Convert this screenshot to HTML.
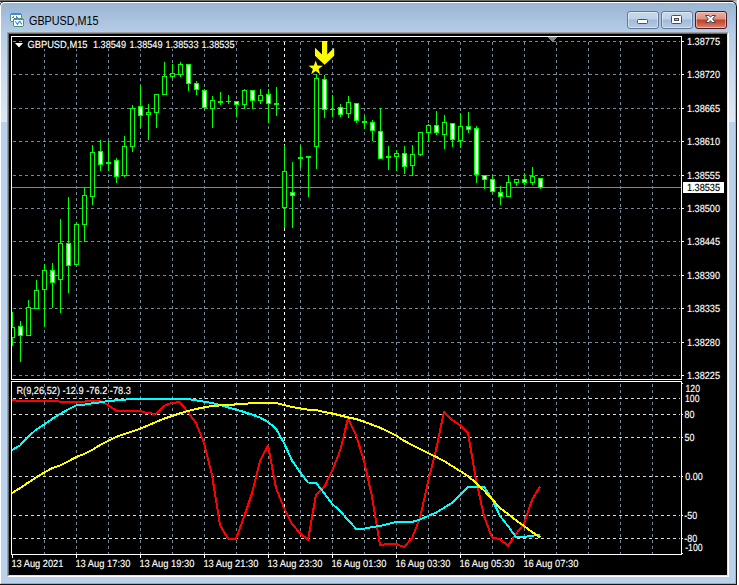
<!DOCTYPE html>
<html><head><meta charset="utf-8"><title>GBPUSD,M15</title>
<style>
html,body{margin:0;padding:0}
body{width:739px;height:585px;position:relative;overflow:hidden;background:#fff;font-family:'Liberation Sans', sans-serif}
.abs{position:absolute}
#win{left:0;top:2px;width:736px;height:582px;box-sizing:border-box;border-left:1px solid #fff;border-top:1px solid #fff;border-right:1px solid #4fd6f7;border-bottom:1px solid #3fd0f0;border-radius:5px 5px 0 0;box-shadow:0 0 0 1px #151515;
background:linear-gradient(to bottom,#99b4d1 0px,#a9c2dd 16px,#b6cde7 30px,#c4d8ee 58px,#dce8f5 119px,#b9d1ea 119.5px,#b9d1ea 100%)}
.btn{top:11px;width:32px;height:18px;box-sizing:border-box;border:1px solid #64779a;border-radius:3px;box-shadow:inset 0 0 0 1px rgba(255,255,255,.45);
background:linear-gradient(to bottom,#c6d8ec 0,#bdd1e8 7px,#a3bad7 8px,#b4cae4 16px)}
#close{border-color:#4a1822;box-shadow:inset 0 0 0 1px rgba(255,220,210,.55);background:linear-gradient(to bottom,#e9b0a3 0,#dd9080 7px,#c24128 8px,#cf5c44 12px,#dc8a76 16px)}
#title{left:29px;top:13px;font-size:12px;line-height:16px;color:#000;white-space:nowrap;transform-origin:0 0;transform:scaleX(0.9)}
</style></head><body>
<div class="abs" style="left:0;top:0;width:737px;height:1px;background:linear-gradient(to right,#707070 0,#707070 731px,#b8b8b8 737px)"></div>
<div class="abs" style="left:0;top:1px;width:733px;height:1px;background:#2b2b2b"></div>
<div class="abs" style="left:733px;top:1px;width:4px;height:5px;background:#c4c4c4"></div>
<div class="abs" style="left:0;top:2px;width:4px;height:4px;background:#e8e8e8"></div>
<div class="abs" id="win"></div>
<!-- icon -->
<svg class="abs" style="left:9px;top:12px" width="16" height="16" viewBox="9 12 16 16" shape-rendering="crispEdges">
<rect x="11" y="15" width="10" height="6" fill="#fffef2"/>
<rect x="11" y="13" width="1" height="1" fill="#3f8f7a"/>
<rect x="12" y="13" width="1" height="1" fill="#4a86ff"/>
<rect x="13" y="13" width="1" height="1" fill="#3f8f7a"/>
<rect x="14" y="13" width="1" height="1" fill="#4a86ff"/>
<rect x="15" y="13" width="1" height="1" fill="#3f8f7a"/>
<rect x="16" y="13" width="1" height="1" fill="#4a86ff"/>
<rect x="17" y="13" width="1" height="1" fill="#3f8f7a"/>
<rect x="18" y="13" width="1" height="1" fill="#4a86ff"/>
<rect x="19" y="13" width="1" height="1" fill="#3f8f7a"/>
<rect x="20" y="13" width="1" height="1" fill="#4a86ff"/>
<rect x="10" y="14" width="12" height="1" fill="#4a86ff"/>
<rect x="14" y="14" width="1" height="1" fill="#3f8f7a"/>
<rect x="18" y="14" width="1" height="1" fill="#3f8f7a"/>
<rect x="10" y="15" width="1" height="1" fill="#4a86ff"/>
<rect x="21" y="15" width="1" height="1" fill="#4a86ff"/>
<rect x="10" y="16" width="1" height="1" fill="#3f8f7a"/>
<rect x="21" y="16" width="1" height="1" fill="#3f8f7a"/>
<rect x="10" y="17" width="1" height="1" fill="#4a86ff"/>
<rect x="21" y="17" width="1" height="1" fill="#4a86ff"/>
<rect x="10" y="18" width="1" height="1" fill="#3f8f7a"/>
<rect x="21" y="18" width="1" height="1" fill="#3f8f7a"/>
<rect x="10" y="19" width="1" height="1" fill="#4a86ff"/>
<rect x="21" y="19" width="1" height="1" fill="#4a86ff"/>
<rect x="10" y="20" width="1" height="1" fill="#3f8f7a"/>
<rect x="21" y="20" width="1" height="1" fill="#3f8f7a"/>
<rect x="11" y="21" width="1" height="1" fill="#3f8f7a"/>
<rect x="12" y="21" width="1" height="1" fill="#4a86ff"/>
<rect x="13" y="21" width="1" height="1" fill="#3f8f7a"/>
<rect x="14" y="21" width="1" height="1" fill="#4a86ff"/>
<rect x="15" y="21" width="1" height="1" fill="#3f8f7a"/>
<rect x="16" y="21" width="1" height="1" fill="#4a86ff"/>
<rect x="17" y="21" width="1" height="1" fill="#3f8f7a"/>
<rect x="18" y="21" width="1" height="1" fill="#4a86ff"/>
<rect x="19" y="21" width="1" height="1" fill="#3f8f7a"/>
<rect x="20" y="21" width="1" height="1" fill="#4a86ff"/>
<rect x="12" y="17" width="2" height="1" fill="#4a86ff"/>
<rect x="13" y="16" width="1" height="1" fill="#4a86ff"/>
<rect x="16" y="16" width="1" height="1" fill="#4a86ff"/>
<rect x="16" y="17" width="2" height="1" fill="#4a86ff"/>
<rect x="14" y="20" width="9" height="6" fill="#ffffff"/>
<rect x="14" y="18" width="1" height="1" fill="#3f8f7a"/>
<rect x="15" y="18" width="1" height="1" fill="#4a86ff"/>
<rect x="16" y="18" width="1" height="1" fill="#3f8f7a"/>
<rect x="17" y="18" width="1" height="1" fill="#4a86ff"/>
<rect x="18" y="18" width="1" height="1" fill="#3f8f7a"/>
<rect x="19" y="18" width="1" height="1" fill="#4a86ff"/>
<rect x="20" y="18" width="1" height="1" fill="#3f8f7a"/>
<rect x="21" y="18" width="1" height="1" fill="#4a86ff"/>
<rect x="22" y="18" width="1" height="1" fill="#3f8f7a"/>
<rect x="13" y="19" width="11" height="1" fill="#4a86ff"/>
<rect x="15" y="19" width="1" height="1" fill="#3f8f7a"/>
<rect x="17" y="19" width="1" height="1" fill="#35c8e8"/>
<rect x="21" y="19" width="1" height="1" fill="#3f8f7a"/>
<rect x="13" y="20" width="1" height="1" fill="#4a86ff"/>
<rect x="23" y="20" width="1" height="1" fill="#4a86ff"/>
<rect x="13" y="21" width="1" height="1" fill="#3f8f7a"/>
<rect x="23" y="21" width="1" height="1" fill="#3f8f7a"/>
<rect x="13" y="22" width="1" height="1" fill="#4a86ff"/>
<rect x="23" y="22" width="1" height="1" fill="#4a86ff"/>
<rect x="13" y="23" width="1" height="1" fill="#3f8f7a"/>
<rect x="23" y="23" width="1" height="1" fill="#3f8f7a"/>
<rect x="13" y="24" width="1" height="1" fill="#4a86ff"/>
<rect x="23" y="24" width="1" height="1" fill="#4a86ff"/>
<rect x="13" y="25" width="1" height="1" fill="#3f8f7a"/>
<rect x="23" y="25" width="1" height="1" fill="#3f8f7a"/>
<rect x="14" y="26" width="1" height="1" fill="#3f8f7a"/>
<rect x="15" y="26" width="1" height="1" fill="#4a86ff"/>
<rect x="16" y="26" width="1" height="1" fill="#3f8f7a"/>
<rect x="17" y="26" width="1" height="1" fill="#4a86ff"/>
<rect x="18" y="26" width="1" height="1" fill="#3f8f7a"/>
<rect x="19" y="26" width="1" height="1" fill="#4a86ff"/>
<rect x="20" y="26" width="1" height="1" fill="#3f8f7a"/>
<rect x="21" y="26" width="1" height="1" fill="#4a86ff"/>
<rect x="22" y="26" width="1" height="1" fill="#3f8f7a"/>
<polyline points="15.3,21.3 17.5,24.4 19.3,21.4 20,21.4 21.8,24.4" fill="none" stroke="#4a86ff" stroke-width="1.1" shape-rendering="geometricPrecision"/>
</svg>
<div class="abs" id="title">GBPUSD,M15</div>
<!-- caption buttons -->
<div class="abs btn" style="left:627px"></div>
<div class="abs btn" style="left:661px"></div>
<div class="abs btn" id="close" style="left:695px"></div>
<svg class="abs" style="left:627px;top:11px" width="100" height="18" viewBox="627 11 100 18">
<rect x="637.5" y="19.5" width="10" height="4" fill="#fff" stroke="#46505f" stroke-width="1" rx="1"/>
<rect x="671.5" y="15.5" width="10" height="8" fill="#fff" stroke="#46505f" stroke-width="1" rx="1"/>
<rect x="674.5" y="18.5" width="4" height="2" fill="#a9c0dc" stroke="#46505f" stroke-width="1"/>
<path d="M705.5 15.5 L709 15.5 L710.5 17.3 L712 15.5 L715.5 15.5 L712.6 19 L715.5 22.5 L712 22.5 L710.5 20.7 L709 22.5 L705.5 22.5 L708.4 19 Z" fill="#fff" stroke="#3c4960" stroke-width="1" stroke-linejoin="round"/>
</svg>
<!-- client edge -->
<div class="abs" style="left:7px;top:32px;width:722px;height:545px;box-sizing:border-box;border:1px solid;border-color:#a0a0a0 #fff #fff #a0a0a0"></div>
<div class="abs" style="left:8px;top:33px;width:720px;height:543px;box-sizing:border-box;border:1px solid;border-color:#696969 #e3e3e3 #e3e3e3 #696969;background:#000"></div>
<svg width="718" height="541" viewBox="9 34 718 541" style="position:absolute;left:9px;top:34px;display:block" font-family="'Liberation Sans', sans-serif" shape-rendering="crispEdges">
<rect x="9" y="34" width="718" height="541" fill="#000"/>
<line x1="13" y1="41.5" x2="680" y2="41.5" stroke="#778899" stroke-width="1" stroke-dasharray="3 3"/>
<line x1="13" y1="74.5" x2="680" y2="74.5" stroke="#778899" stroke-width="1" stroke-dasharray="3 3"/>
<line x1="13" y1="108.5" x2="680" y2="108.5" stroke="#778899" stroke-width="1" stroke-dasharray="3 3"/>
<line x1="13" y1="141.5" x2="680" y2="141.5" stroke="#778899" stroke-width="1" stroke-dasharray="3 3"/>
<line x1="13" y1="175.5" x2="680" y2="175.5" stroke="#778899" stroke-width="1" stroke-dasharray="3 3"/>
<line x1="13" y1="208.5" x2="680" y2="208.5" stroke="#778899" stroke-width="1" stroke-dasharray="3 3"/>
<line x1="13" y1="241.5" x2="680" y2="241.5" stroke="#778899" stroke-width="1" stroke-dasharray="3 3"/>
<line x1="13" y1="275.5" x2="680" y2="275.5" stroke="#778899" stroke-width="1" stroke-dasharray="3 3"/>
<line x1="13" y1="308.5" x2="680" y2="308.5" stroke="#778899" stroke-width="1" stroke-dasharray="3 3"/>
<line x1="13" y1="342.5" x2="680" y2="342.5" stroke="#778899" stroke-width="1" stroke-dasharray="3 3"/>
<line x1="13" y1="375.5" x2="680" y2="375.5" stroke="#778899" stroke-width="1" stroke-dasharray="3 3"/>
<line x1="44.5" y1="42" x2="44.5" y2="379" stroke="#778899" stroke-width="1" stroke-dasharray="3 3"/>
<line x1="76.5" y1="42" x2="76.5" y2="379" stroke="#778899" stroke-width="1" stroke-dasharray="3 3"/>
<line x1="108.5" y1="42" x2="108.5" y2="379" stroke="#778899" stroke-width="1" stroke-dasharray="3 3"/>
<line x1="140.5" y1="42" x2="140.5" y2="379" stroke="#778899" stroke-width="1" stroke-dasharray="3 3"/>
<line x1="172.5" y1="42" x2="172.5" y2="379" stroke="#778899" stroke-width="1" stroke-dasharray="3 3"/>
<line x1="204.5" y1="42" x2="204.5" y2="379" stroke="#778899" stroke-width="1" stroke-dasharray="3 3"/>
<line x1="236.5" y1="42" x2="236.5" y2="379" stroke="#778899" stroke-width="1" stroke-dasharray="3 3"/>
<line x1="268.5" y1="42" x2="268.5" y2="379" stroke="#778899" stroke-width="1" stroke-dasharray="3 3"/>
<line x1="300.5" y1="42" x2="300.5" y2="379" stroke="#778899" stroke-width="1" stroke-dasharray="3 3"/>
<line x1="332.5" y1="42" x2="332.5" y2="379" stroke="#778899" stroke-width="1" stroke-dasharray="3 3"/>
<line x1="364.5" y1="42" x2="364.5" y2="379" stroke="#778899" stroke-width="1" stroke-dasharray="3 3"/>
<line x1="396.5" y1="42" x2="396.5" y2="379" stroke="#778899" stroke-width="1" stroke-dasharray="3 3"/>
<line x1="428.5" y1="42" x2="428.5" y2="379" stroke="#778899" stroke-width="1" stroke-dasharray="3 3"/>
<line x1="460.5" y1="42" x2="460.5" y2="379" stroke="#778899" stroke-width="1" stroke-dasharray="3 3"/>
<line x1="492.5" y1="42" x2="492.5" y2="379" stroke="#778899" stroke-width="1" stroke-dasharray="3 3"/>
<line x1="524.5" y1="42" x2="524.5" y2="379" stroke="#778899" stroke-width="1" stroke-dasharray="3 3"/>
<line x1="556.5" y1="42" x2="556.5" y2="379" stroke="#778899" stroke-width="1" stroke-dasharray="3 3"/>
<line x1="588.5" y1="42" x2="588.5" y2="379" stroke="#778899" stroke-width="1" stroke-dasharray="3 3"/>
<line x1="620.5" y1="42" x2="620.5" y2="379" stroke="#778899" stroke-width="1" stroke-dasharray="3 3"/>
<line x1="652.5" y1="42" x2="652.5" y2="379" stroke="#778899" stroke-width="1" stroke-dasharray="3 3"/>
<line x1="44.5" y1="384" x2="44.5" y2="554" stroke="#778899" stroke-width="1" stroke-dasharray="3 3"/>
<line x1="76.5" y1="384" x2="76.5" y2="554" stroke="#778899" stroke-width="1" stroke-dasharray="3 3"/>
<line x1="108.5" y1="384" x2="108.5" y2="554" stroke="#778899" stroke-width="1" stroke-dasharray="3 3"/>
<line x1="140.5" y1="384" x2="140.5" y2="554" stroke="#778899" stroke-width="1" stroke-dasharray="3 3"/>
<line x1="172.5" y1="384" x2="172.5" y2="554" stroke="#778899" stroke-width="1" stroke-dasharray="3 3"/>
<line x1="204.5" y1="384" x2="204.5" y2="554" stroke="#778899" stroke-width="1" stroke-dasharray="3 3"/>
<line x1="236.5" y1="384" x2="236.5" y2="554" stroke="#778899" stroke-width="1" stroke-dasharray="3 3"/>
<line x1="268.5" y1="384" x2="268.5" y2="554" stroke="#778899" stroke-width="1" stroke-dasharray="3 3"/>
<line x1="300.5" y1="384" x2="300.5" y2="554" stroke="#778899" stroke-width="1" stroke-dasharray="3 3"/>
<line x1="332.5" y1="384" x2="332.5" y2="554" stroke="#778899" stroke-width="1" stroke-dasharray="3 3"/>
<line x1="364.5" y1="384" x2="364.5" y2="554" stroke="#778899" stroke-width="1" stroke-dasharray="3 3"/>
<line x1="396.5" y1="384" x2="396.5" y2="554" stroke="#778899" stroke-width="1" stroke-dasharray="3 3"/>
<line x1="428.5" y1="384" x2="428.5" y2="554" stroke="#778899" stroke-width="1" stroke-dasharray="3 3"/>
<line x1="460.5" y1="384" x2="460.5" y2="554" stroke="#778899" stroke-width="1" stroke-dasharray="3 3"/>
<line x1="492.5" y1="384" x2="492.5" y2="554" stroke="#778899" stroke-width="1" stroke-dasharray="3 3"/>
<line x1="524.5" y1="384" x2="524.5" y2="554" stroke="#778899" stroke-width="1" stroke-dasharray="3 3"/>
<line x1="556.5" y1="384" x2="556.5" y2="554" stroke="#778899" stroke-width="1" stroke-dasharray="3 3"/>
<line x1="588.5" y1="384" x2="588.5" y2="554" stroke="#778899" stroke-width="1" stroke-dasharray="3 3"/>
<line x1="620.5" y1="384" x2="620.5" y2="554" stroke="#778899" stroke-width="1" stroke-dasharray="3 3"/>
<line x1="652.5" y1="384" x2="652.5" y2="554" stroke="#778899" stroke-width="1" stroke-dasharray="3 3"/>
<line x1="13" y1="398.5" x2="680" y2="398.5" stroke="#dcdcdc" stroke-width="1" stroke-dasharray="3 3"/>
<line x1="13" y1="414.5" x2="680" y2="414.5" stroke="#dcdcdc" stroke-width="1" stroke-dasharray="3 3"/>
<line x1="13" y1="437.5" x2="680" y2="437.5" stroke="#dcdcdc" stroke-width="1" stroke-dasharray="3 3"/>
<line x1="13" y1="476.5" x2="680" y2="476.5" stroke="#dcdcdc" stroke-width="1" stroke-dasharray="3 3"/>
<line x1="13" y1="515.5" x2="680" y2="515.5" stroke="#dcdcdc" stroke-width="1" stroke-dasharray="3 3"/>
<line x1="13" y1="538.5" x2="680" y2="538.5" stroke="#dcdcdc" stroke-width="1" stroke-dasharray="3 3"/>
<line x1="284.5" y1="42" x2="284.5" y2="379" stroke="#fff" stroke-width="1" stroke-dasharray="3 3"/>
<line x1="284.5" y1="384" x2="284.5" y2="554" stroke="#fff" stroke-width="1" stroke-dasharray="3 3"/>
<rect x="11" y="36" width="671" height="1" fill="#fff"/>
<rect x="11" y="379" width="671" height="1" fill="#fff"/>
<rect x="11" y="36" width="1" height="344" fill="#fff"/>
<rect x="681" y="36" width="1" height="344" fill="#fff"/>
<rect x="11" y="381" width="671" height="1" fill="#fff"/>
<rect x="11" y="554" width="671" height="1" fill="#fff"/>
<rect x="11" y="381" width="1" height="174" fill="#fff"/>
<rect x="681" y="381" width="1" height="174" fill="#fff"/>
<rect x="548" y="37" width="9" height="1" fill="#778899"/>
<rect x="549" y="38" width="7" height="1" fill="#778899"/>
<rect x="550" y="39" width="5" height="1" fill="#778899"/>
<rect x="551" y="40" width="3" height="1" fill="#778899"/>
<rect x="552" y="41" width="1" height="1" fill="#778899"/>
<rect x="12" y="187" width="669" height="1" fill="#778899"/>
<g>
<rect x="12" y="312" width="1" height="34" fill="#00ff00"/>
<rect x="12" y="327" width="3" height="11" fill="#00ff00"/>
<rect x="12" y="328" width="2" height="9" fill="#000"/>
<rect x="20" y="321" width="1" height="41" fill="#00ff00"/>
<rect x="18" y="326" width="5" height="10" fill="#00ff00"/>
<rect x="19" y="327" width="3" height="8" fill="#fff"/>
<rect x="28" y="300" width="1" height="36" fill="#00ff00"/>
<rect x="26" y="307" width="5" height="29" fill="#00ff00"/>
<rect x="27" y="308" width="3" height="27" fill="#000"/>
<rect x="36" y="280" width="1" height="29" fill="#00ff00"/>
<rect x="34" y="290" width="5" height="19" fill="#00ff00"/>
<rect x="35" y="291" width="3" height="17" fill="#000"/>
<rect x="44" y="264" width="1" height="63" fill="#00ff00"/>
<rect x="42" y="270" width="5" height="20" fill="#00ff00"/>
<rect x="43" y="271" width="3" height="18" fill="#000"/>
<rect x="52" y="263" width="1" height="45" fill="#00ff00"/>
<rect x="50" y="270" width="5" height="13" fill="#00ff00"/>
<rect x="51" y="271" width="3" height="11" fill="#fff"/>
<rect x="60" y="219" width="1" height="94" fill="#00ff00"/>
<rect x="58" y="243" width="5" height="37" fill="#00ff00"/>
<rect x="59" y="244" width="3" height="35" fill="#000"/>
<rect x="68" y="197" width="1" height="96" fill="#00ff00"/>
<rect x="66" y="243" width="5" height="23" fill="#00ff00"/>
<rect x="67" y="244" width="3" height="21" fill="#fff"/>
<rect x="76" y="222" width="1" height="43" fill="#00ff00"/>
<rect x="74" y="224" width="5" height="41" fill="#00ff00"/>
<rect x="75" y="225" width="3" height="39" fill="#000"/>
<rect x="84" y="188" width="1" height="54" fill="#00ff00"/>
<rect x="82" y="195" width="5" height="30" fill="#00ff00"/>
<rect x="83" y="196" width="3" height="28" fill="#000"/>
<rect x="92" y="145" width="1" height="60" fill="#00ff00"/>
<rect x="90" y="152" width="5" height="45" fill="#00ff00"/>
<rect x="91" y="153" width="3" height="43" fill="#000"/>
<rect x="100" y="140" width="1" height="31" fill="#00ff00"/>
<rect x="98" y="151" width="5" height="14" fill="#00ff00"/>
<rect x="99" y="152" width="3" height="12" fill="#fff"/>
<rect x="108" y="141" width="1" height="30" fill="#00ff00"/>
<rect x="106" y="162" width="5" height="2" fill="#00ff00"/>
<rect x="116" y="158" width="1" height="25" fill="#00ff00"/>
<rect x="114" y="160" width="5" height="17" fill="#00ff00"/>
<rect x="115" y="161" width="3" height="15" fill="#fff"/>
<rect x="124" y="136" width="1" height="41" fill="#00ff00"/>
<rect x="122" y="146" width="5" height="30" fill="#00ff00"/>
<rect x="123" y="147" width="3" height="28" fill="#000"/>
<rect x="132" y="105" width="1" height="47" fill="#00ff00"/>
<rect x="130" y="108" width="5" height="39" fill="#00ff00"/>
<rect x="131" y="109" width="3" height="37" fill="#000"/>
<rect x="140" y="85" width="1" height="43" fill="#00ff00"/>
<rect x="138" y="106" width="5" height="10" fill="#00ff00"/>
<rect x="139" y="107" width="3" height="8" fill="#fff"/>
<rect x="148" y="104" width="1" height="36" fill="#00ff00"/>
<rect x="146" y="112" width="5" height="3" fill="#00ff00"/>
<rect x="147" y="113" width="3" height="1" fill="#000"/>
<rect x="156" y="94" width="1" height="34" fill="#00ff00"/>
<rect x="154" y="94" width="5" height="19" fill="#00ff00"/>
<rect x="155" y="95" width="3" height="17" fill="#000"/>
<rect x="164" y="62" width="1" height="33" fill="#00ff00"/>
<rect x="162" y="76" width="5" height="19" fill="#00ff00"/>
<rect x="163" y="77" width="3" height="17" fill="#000"/>
<rect x="172" y="64" width="1" height="14" fill="#00ff00"/>
<rect x="170" y="73" width="5" height="4" fill="#00ff00"/>
<rect x="171" y="74" width="3" height="2" fill="#000"/>
<rect x="180" y="62" width="1" height="15" fill="#00ff00"/>
<rect x="178" y="64" width="5" height="11" fill="#00ff00"/>
<rect x="179" y="65" width="3" height="9" fill="#000"/>
<rect x="188" y="64" width="1" height="27" fill="#00ff00"/>
<rect x="186" y="64" width="5" height="20" fill="#00ff00"/>
<rect x="187" y="65" width="3" height="18" fill="#fff"/>
<rect x="196" y="81" width="1" height="14" fill="#00ff00"/>
<rect x="194" y="83" width="5" height="7" fill="#00ff00"/>
<rect x="195" y="84" width="3" height="5" fill="#fff"/>
<rect x="204" y="89" width="1" height="21" fill="#00ff00"/>
<rect x="202" y="90" width="5" height="18" fill="#00ff00"/>
<rect x="203" y="91" width="3" height="16" fill="#fff"/>
<rect x="212" y="96" width="1" height="32" fill="#00ff00"/>
<rect x="210" y="100" width="5" height="9" fill="#00ff00"/>
<rect x="211" y="101" width="3" height="7" fill="#000"/>
<rect x="220" y="92" width="1" height="13" fill="#00ff00"/>
<rect x="218" y="101" width="5" height="2" fill="#00ff00"/>
<rect x="228" y="95" width="1" height="9" fill="#00ff00"/>
<rect x="226" y="101" width="5" height="1" fill="#00ff00"/>
<rect x="236" y="101" width="1" height="16" fill="#00ff00"/>
<rect x="234" y="101" width="5" height="4" fill="#00ff00"/>
<rect x="235" y="102" width="3" height="2" fill="#fff"/>
<rect x="244" y="89" width="1" height="20" fill="#00ff00"/>
<rect x="242" y="90" width="5" height="15" fill="#00ff00"/>
<rect x="243" y="91" width="3" height="13" fill="#000"/>
<rect x="252" y="90" width="1" height="19" fill="#00ff00"/>
<rect x="250" y="90" width="5" height="11" fill="#00ff00"/>
<rect x="251" y="91" width="3" height="9" fill="#fff"/>
<rect x="260" y="89" width="1" height="15" fill="#00ff00"/>
<rect x="258" y="95" width="5" height="6" fill="#00ff00"/>
<rect x="259" y="96" width="3" height="4" fill="#000"/>
<rect x="268" y="89" width="1" height="34" fill="#00ff00"/>
<rect x="266" y="94" width="5" height="10" fill="#00ff00"/>
<rect x="267" y="95" width="3" height="8" fill="#fff"/>
<rect x="276" y="87" width="1" height="29" fill="#00ff00"/>
<rect x="274" y="103" width="5" height="2" fill="#00ff00"/>
<rect x="284" y="145" width="1" height="83" fill="#00ff00"/>
<rect x="282" y="171" width="5" height="37" fill="#00ff00"/>
<rect x="283" y="172" width="3" height="35" fill="#000"/>
<rect x="292" y="162" width="1" height="66" fill="#00ff00"/>
<rect x="290" y="192" width="5" height="4" fill="#00ff00"/>
<rect x="291" y="193" width="3" height="2" fill="#fff"/>
<rect x="300" y="145" width="1" height="23" fill="#00ff00"/>
<rect x="298" y="157" width="5" height="2" fill="#00ff00"/>
<rect x="308" y="156" width="1" height="41" fill="#00ff00"/>
<rect x="306" y="156" width="5" height="2" fill="#00ff00"/>
<rect x="316" y="74" width="1" height="95" fill="#00ff00"/>
<rect x="314" y="78" width="5" height="69" fill="#00ff00"/>
<rect x="315" y="79" width="3" height="67" fill="#000"/>
<rect x="324" y="75" width="1" height="43" fill="#00ff00"/>
<rect x="322" y="79" width="5" height="31" fill="#00ff00"/>
<rect x="323" y="80" width="3" height="29" fill="#fff"/>
<rect x="332" y="95" width="1" height="22" fill="#00ff00"/>
<rect x="330" y="109" width="5" height="1" fill="#00ff00"/>
<rect x="340" y="104" width="1" height="13" fill="#00ff00"/>
<rect x="338" y="107" width="5" height="8" fill="#00ff00"/>
<rect x="339" y="108" width="3" height="6" fill="#fff"/>
<rect x="348" y="96" width="1" height="22" fill="#00ff00"/>
<rect x="346" y="102" width="5" height="12" fill="#00ff00"/>
<rect x="347" y="103" width="3" height="10" fill="#000"/>
<rect x="356" y="103" width="1" height="20" fill="#00ff00"/>
<rect x="354" y="103" width="5" height="18" fill="#00ff00"/>
<rect x="355" y="104" width="3" height="16" fill="#fff"/>
<rect x="364" y="115" width="1" height="14" fill="#00ff00"/>
<rect x="362" y="121" width="5" height="2" fill="#00ff00"/>
<rect x="372" y="120" width="1" height="21" fill="#00ff00"/>
<rect x="370" y="122" width="5" height="9" fill="#00ff00"/>
<rect x="371" y="123" width="3" height="7" fill="#fff"/>
<rect x="380" y="108" width="1" height="51" fill="#00ff00"/>
<rect x="378" y="131" width="5" height="28" fill="#00ff00"/>
<rect x="379" y="132" width="3" height="26" fill="#fff"/>
<rect x="388" y="146" width="1" height="24" fill="#00ff00"/>
<rect x="386" y="156" width="5" height="2" fill="#00ff00"/>
<rect x="396" y="150" width="1" height="21" fill="#00ff00"/>
<rect x="394" y="153" width="5" height="4" fill="#00ff00"/>
<rect x="395" y="154" width="3" height="2" fill="#000"/>
<rect x="404" y="146" width="1" height="28" fill="#00ff00"/>
<rect x="402" y="153" width="5" height="14" fill="#00ff00"/>
<rect x="403" y="154" width="3" height="12" fill="#fff"/>
<rect x="412" y="145" width="1" height="31" fill="#00ff00"/>
<rect x="410" y="154" width="5" height="12" fill="#00ff00"/>
<rect x="411" y="155" width="3" height="10" fill="#000"/>
<rect x="420" y="132" width="1" height="24" fill="#00ff00"/>
<rect x="418" y="132" width="5" height="23" fill="#00ff00"/>
<rect x="419" y="133" width="3" height="21" fill="#000"/>
<rect x="428" y="124" width="1" height="17" fill="#00ff00"/>
<rect x="426" y="125" width="5" height="8" fill="#00ff00"/>
<rect x="427" y="126" width="3" height="6" fill="#000"/>
<rect x="436" y="111" width="1" height="24" fill="#00ff00"/>
<rect x="434" y="125" width="5" height="8" fill="#00ff00"/>
<rect x="435" y="126" width="3" height="6" fill="#fff"/>
<rect x="444" y="115" width="1" height="34" fill="#00ff00"/>
<rect x="442" y="122" width="5" height="13" fill="#00ff00"/>
<rect x="443" y="123" width="3" height="11" fill="#000"/>
<rect x="452" y="123" width="1" height="24" fill="#00ff00"/>
<rect x="450" y="123" width="5" height="17" fill="#00ff00"/>
<rect x="451" y="124" width="3" height="15" fill="#fff"/>
<rect x="460" y="113" width="1" height="35" fill="#00ff00"/>
<rect x="458" y="126" width="5" height="15" fill="#00ff00"/>
<rect x="459" y="127" width="3" height="13" fill="#000"/>
<rect x="468" y="112" width="1" height="21" fill="#00ff00"/>
<rect x="466" y="126" width="5" height="4" fill="#00ff00"/>
<rect x="467" y="127" width="3" height="2" fill="#fff"/>
<rect x="476" y="126" width="1" height="57" fill="#00ff00"/>
<rect x="474" y="128" width="5" height="47" fill="#00ff00"/>
<rect x="475" y="129" width="3" height="45" fill="#fff"/>
<rect x="484" y="175" width="1" height="14" fill="#00ff00"/>
<rect x="482" y="175" width="5" height="5" fill="#00ff00"/>
<rect x="483" y="176" width="3" height="3" fill="#fff"/>
<rect x="492" y="175" width="1" height="19" fill="#00ff00"/>
<rect x="490" y="179" width="5" height="13" fill="#00ff00"/>
<rect x="491" y="180" width="3" height="11" fill="#fff"/>
<rect x="500" y="186" width="1" height="19" fill="#00ff00"/>
<rect x="498" y="192" width="5" height="5" fill="#00ff00"/>
<rect x="499" y="193" width="3" height="3" fill="#fff"/>
<rect x="508" y="175" width="1" height="22" fill="#00ff00"/>
<rect x="506" y="182" width="5" height="15" fill="#00ff00"/>
<rect x="507" y="183" width="3" height="13" fill="#000"/>
<rect x="516" y="179" width="1" height="7" fill="#00ff00"/>
<rect x="514" y="179" width="5" height="4" fill="#00ff00"/>
<rect x="515" y="180" width="3" height="2" fill="#000"/>
<rect x="524" y="173" width="1" height="12" fill="#00ff00"/>
<rect x="522" y="179" width="5" height="4" fill="#00ff00"/>
<rect x="523" y="180" width="3" height="2" fill="#fff"/>
<rect x="532" y="167" width="1" height="18" fill="#00ff00"/>
<rect x="530" y="176" width="5" height="7" fill="#00ff00"/>
<rect x="531" y="177" width="3" height="5" fill="#000"/>
<rect x="540" y="178" width="1" height="11" fill="#00ff00"/>
<rect x="538" y="178" width="5" height="10" fill="#00ff00"/>
<rect x="539" y="179" width="3" height="8" fill="#fff"/>
</g>
<g shape-rendering="geometricPrecision" fill="#ffff00">
<polygon points="322,41 327.2,41 327.2,54.4 334.2,47.8 334.2,55.7 324.6,64.8 315,55.7 315,47.8 322,54.4"/>
<polygon points="315.70,60.40 317.46,65.57 322.93,65.65 318.55,68.93 320.17,74.15 315.70,71.00 311.23,74.15 312.85,68.93 308.47,65.65 313.94,65.57"/>
</g>
<polyline points="12,399.6 16,400.6 20,400.8 28,400.8 36,400.8 44,400.8 52,400.8 60,401.6 68,401.6 76,401.6 84,401.6 92,400.6 100,401 108,405 116,410.6 124,411 132,411 140,411 148,413.4 156,413.6 164,406 172,402.6 180,402.4 188,412 196,423 204,443 212,475 220,525 228,538.5 236,538.5 244,517 252,493 260,461 268,445.5 276,488 284,508 292,524 300,533 308,540 316,494.5 324,487.5 332,471 340,451 348,418.6 356,435 364,461 372,496.5 380,545 388,544 396,544 404,547 412,538 420,518 428,482 436,450 444,411.7 452,420 460,425 468,433 476,479.5 484,516 492,537.5 500,539 508,546 516,534 524,523.7 532,500 540,486.5" fill="none" stroke="#ff0000" stroke-width="2" stroke-linejoin="round"/>
<polyline points="12,450 20,445.5 28,437 36,429.7 44,424.7 52,419 60,414 68,409.6 76,405.4 84,404.6 92,403.4 100,402.4 108,401 116,400.4 124,399.6 132,399.2 140,399.2 148,399 156,399 164,399 172,399 180,399 188,399 196,400.4 204,401.6 212,403 220,405 228,407.4 236,409.6 244,412 252,414.6 260,417.6 268,422 276,428.7 284,443 292,460.5 300,472 308,482.5 316,482.7 324,493 332,503.7 340,511 348,520 356,528.7 364,528.7 372,527 380,526 388,524 396,522 404,522 412,522 420,519.5 428,516 436,512.7 444,507.8 452,502.8 460,495 468,486.8 476,486.8 484,486.8 492,499 500,516 508,526 516,537 524,537 532,535.7 540,535" fill="none" stroke="#00ffff" stroke-width="2" stroke-linejoin="round"/>
<polyline points="12,493.2 20,488.1 28,482.7 36,477.5 44,472.7 52,468.1 60,465.5 68,461.5 76,457.1 84,454.1 92,450.1 100,445.1 108,441.1 116,437.1 124,434.1 132,431.5 140,428.7 148,425.5 156,422 164,418.7 172,416 180,413.4 188,411 196,409 204,407.4 212,406 220,405.4 228,405 236,404.4 244,404 252,403 260,402.6 268,402.6 276,403 284,405 292,407 300,408.4 308,409.6 316,410 324,412 332,413.4 340,415.4 348,417.4 356,419 364,421.7 372,424.7 380,427.7 388,431.5 396,435.5 404,440.7 412,445.1 420,449.1 428,453.1 436,456.8 444,461 452,466 460,471 468,476 476,483 484,490.5 492,499 500,508 508,514 516,520.3 524,526 532,532 540,537.3" fill="none" stroke="#ffff00" stroke-width="2" stroke-linejoin="round"/>
<g shape-rendering="geometricPrecision" text-rendering="geometricPrecision">
<rect x="682" y="41" width="2" height="1" fill="#fff" shape-rendering="crispEdges"/>
<text x="687" y="45" fill="#fff" stroke="#fff" stroke-width="0.15" font-size="10.3" textLength="33" lengthAdjust="spacingAndGlyphs" text-anchor="start">1.38775</text>
<rect x="682" y="74" width="2" height="1" fill="#fff" shape-rendering="crispEdges"/>
<text x="687" y="78" fill="#fff" stroke="#fff" stroke-width="0.15" font-size="10.3" textLength="33" lengthAdjust="spacingAndGlyphs" text-anchor="start">1.38720</text>
<rect x="682" y="108" width="2" height="1" fill="#fff" shape-rendering="crispEdges"/>
<text x="687" y="112" fill="#fff" stroke="#fff" stroke-width="0.15" font-size="10.3" textLength="33" lengthAdjust="spacingAndGlyphs" text-anchor="start">1.38665</text>
<rect x="682" y="141" width="2" height="1" fill="#fff" shape-rendering="crispEdges"/>
<text x="687" y="145" fill="#fff" stroke="#fff" stroke-width="0.15" font-size="10.3" textLength="33" lengthAdjust="spacingAndGlyphs" text-anchor="start">1.38610</text>
<rect x="682" y="175" width="2" height="1" fill="#fff" shape-rendering="crispEdges"/>
<text x="687" y="179" fill="#fff" stroke="#fff" stroke-width="0.15" font-size="10.3" textLength="33" lengthAdjust="spacingAndGlyphs" text-anchor="start">1.38555</text>
<rect x="682" y="208" width="2" height="1" fill="#fff" shape-rendering="crispEdges"/>
<text x="687" y="212" fill="#fff" stroke="#fff" stroke-width="0.15" font-size="10.3" textLength="33" lengthAdjust="spacingAndGlyphs" text-anchor="start">1.38500</text>
<rect x="682" y="241" width="2" height="1" fill="#fff" shape-rendering="crispEdges"/>
<text x="687" y="245" fill="#fff" stroke="#fff" stroke-width="0.15" font-size="10.3" textLength="33" lengthAdjust="spacingAndGlyphs" text-anchor="start">1.38445</text>
<rect x="682" y="275" width="2" height="1" fill="#fff" shape-rendering="crispEdges"/>
<text x="687" y="279" fill="#fff" stroke="#fff" stroke-width="0.15" font-size="10.3" textLength="33" lengthAdjust="spacingAndGlyphs" text-anchor="start">1.38390</text>
<rect x="682" y="308" width="2" height="1" fill="#fff" shape-rendering="crispEdges"/>
<text x="687" y="312" fill="#fff" stroke="#fff" stroke-width="0.15" font-size="10.3" textLength="33" lengthAdjust="spacingAndGlyphs" text-anchor="start">1.38335</text>
<rect x="682" y="342" width="2" height="1" fill="#fff" shape-rendering="crispEdges"/>
<text x="687" y="346" fill="#fff" stroke="#fff" stroke-width="0.15" font-size="10.3" textLength="33" lengthAdjust="spacingAndGlyphs" text-anchor="start">1.38280</text>
<rect x="682" y="375" width="2" height="1" fill="#fff" shape-rendering="crispEdges"/>
<text x="687" y="379" fill="#fff" stroke="#fff" stroke-width="0.15" font-size="10.3" textLength="33" lengthAdjust="spacingAndGlyphs" text-anchor="start">1.38225</text>
<rect x="683" y="182" width="41" height="11" fill="#fff" shape-rendering="crispEdges"/>
<text x="687" y="191" fill="#000" stroke="#000" stroke-width="0.15" font-size="10.3" textLength="33" lengthAdjust="spacingAndGlyphs" text-anchor="start">1.38535</text>
<text x="685.5" y="392" fill="#fff" stroke="#fff" stroke-width="0.15" font-size="10.3" textLength="14.5" lengthAdjust="spacingAndGlyphs" text-anchor="start">120</text>
<text x="685" y="402" fill="#fff" stroke="#fff" stroke-width="0.15" font-size="10.3" textLength="14.5" lengthAdjust="spacingAndGlyphs" text-anchor="start">100</text>
<text x="684.5" y="418" fill="#fff" stroke="#fff" stroke-width="0.15" font-size="10.3" textLength="10" lengthAdjust="spacingAndGlyphs" text-anchor="start">80</text>
<text x="684.5" y="441" fill="#fff" stroke="#fff" stroke-width="0.15" font-size="10.3" textLength="10" lengthAdjust="spacingAndGlyphs" text-anchor="start">50</text>
<text x="685.3" y="480" fill="#fff" stroke="#fff" stroke-width="0.15" font-size="10.3" textLength="17.5" lengthAdjust="spacingAndGlyphs" text-anchor="start">0.00</text>
<text x="684.2" y="519" fill="#fff" stroke="#fff" stroke-width="0.15" font-size="10.3" textLength="13" lengthAdjust="spacingAndGlyphs" text-anchor="start">-50</text>
<text x="684.2" y="542" fill="#fff" stroke="#fff" stroke-width="0.15" font-size="10.3" textLength="13" lengthAdjust="spacingAndGlyphs" text-anchor="start">-80</text>
<text x="685.2" y="551" fill="#fff" stroke="#fff" stroke-width="0.15" font-size="10.3" textLength="17.5" lengthAdjust="spacingAndGlyphs" text-anchor="start">-100</text>
<rect x="682" y="383" width="1" height="1" fill="#fff" shape-rendering="crispEdges"/>
<rect x="682" y="414" width="1" height="1" fill="#fff" shape-rendering="crispEdges"/>
<rect x="682" y="437" width="1" height="1" fill="#fff" shape-rendering="crispEdges"/>
<rect x="682" y="476" width="1" height="1" fill="#fff" shape-rendering="crispEdges"/>
<rect x="682" y="515" width="1" height="1" fill="#fff" shape-rendering="crispEdges"/>
<rect x="682" y="538" width="1" height="1" fill="#fff" shape-rendering="crispEdges"/>
<rect x="682" y="553" width="1" height="1" fill="#fff" shape-rendering="crispEdges"/>
<rect x="12" y="555" width="1" height="3" fill="#fff" shape-rendering="crispEdges"/>
<text x="11.4" y="567" fill="#fff" stroke="#fff" stroke-width="0.15" font-size="10.3" textLength="52" lengthAdjust="spacingAndGlyphs" text-anchor="start">13 Aug 2021</text>
<rect x="76" y="555" width="1" height="3" fill="#fff" shape-rendering="crispEdges"/>
<text x="75.4" y="567" fill="#fff" stroke="#fff" stroke-width="0.15" font-size="10.3" textLength="55" lengthAdjust="spacingAndGlyphs" text-anchor="start">13 Aug 17:30</text>
<rect x="140" y="555" width="1" height="3" fill="#fff" shape-rendering="crispEdges"/>
<text x="139.4" y="567" fill="#fff" stroke="#fff" stroke-width="0.15" font-size="10.3" textLength="55" lengthAdjust="spacingAndGlyphs" text-anchor="start">13 Aug 19:30</text>
<rect x="204" y="555" width="1" height="3" fill="#fff" shape-rendering="crispEdges"/>
<text x="203.4" y="567" fill="#fff" stroke="#fff" stroke-width="0.15" font-size="10.3" textLength="55" lengthAdjust="spacingAndGlyphs" text-anchor="start">13 Aug 21:30</text>
<rect x="268" y="555" width="1" height="3" fill="#fff" shape-rendering="crispEdges"/>
<text x="267.4" y="567" fill="#fff" stroke="#fff" stroke-width="0.15" font-size="10.3" textLength="55" lengthAdjust="spacingAndGlyphs" text-anchor="start">13 Aug 23:30</text>
<rect x="332" y="555" width="1" height="3" fill="#fff" shape-rendering="crispEdges"/>
<text x="331.4" y="567" fill="#fff" stroke="#fff" stroke-width="0.15" font-size="10.3" textLength="55" lengthAdjust="spacingAndGlyphs" text-anchor="start">16 Aug 01:30</text>
<rect x="396" y="555" width="1" height="3" fill="#fff" shape-rendering="crispEdges"/>
<text x="395.4" y="567" fill="#fff" stroke="#fff" stroke-width="0.15" font-size="10.3" textLength="55" lengthAdjust="spacingAndGlyphs" text-anchor="start">16 Aug 03:30</text>
<rect x="460" y="555" width="1" height="3" fill="#fff" shape-rendering="crispEdges"/>
<text x="459.4" y="567" fill="#fff" stroke="#fff" stroke-width="0.15" font-size="10.3" textLength="55" lengthAdjust="spacingAndGlyphs" text-anchor="start">16 Aug 05:30</text>
<rect x="524" y="555" width="1" height="3" fill="#fff" shape-rendering="crispEdges"/>
<text x="523.4" y="567" fill="#fff" stroke="#fff" stroke-width="0.15" font-size="10.3" textLength="55" lengthAdjust="spacingAndGlyphs" text-anchor="start">16 Aug 07:30</text>
<rect x="24" y="39" width="211" height="10" fill="#000" shape-rendering="crispEdges"/>
<polygon points="15,43 23,43 19,47.5" fill="#fff"/>
<text x="27.5" y="48" fill="#fff" stroke="#fff" stroke-width="0.15" font-size="10.3" textLength="60" lengthAdjust="spacingAndGlyphs" text-anchor="start">GBPUSD,M15</text>
<text x="93" y="48" fill="#fff" stroke="#fff" stroke-width="0.15" font-size="10.3" textLength="33" lengthAdjust="spacingAndGlyphs" text-anchor="start">1.38549</text>
<text x="129.5" y="48" fill="#fff" stroke="#fff" stroke-width="0.15" font-size="10.3" textLength="33" lengthAdjust="spacingAndGlyphs" text-anchor="start">1.38549</text>
<text x="165.5" y="48" fill="#fff" stroke="#fff" stroke-width="0.15" font-size="10.3" textLength="33" lengthAdjust="spacingAndGlyphs" text-anchor="start">1.38533</text>
<text x="201.5" y="48" fill="#fff" stroke="#fff" stroke-width="0.15" font-size="10.3" textLength="33" lengthAdjust="spacingAndGlyphs" text-anchor="start">1.38535</text>
<text x="16.4" y="394" fill="#fff" stroke="#fff" stroke-width="0.15" font-size="10.3" textLength="114.5" lengthAdjust="spacingAndGlyphs" text-anchor="start">R(9,26,52) -12.9 -76.2 -78.3</text>
</g>
</svg>
</body></html>
